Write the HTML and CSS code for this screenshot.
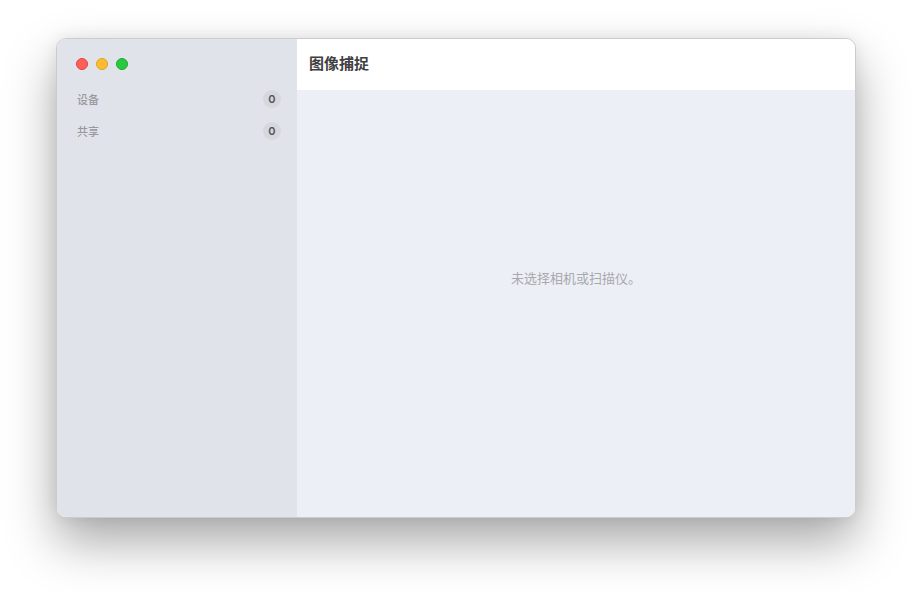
FILE: index.html
```html
<!DOCTYPE html>
<html lang="zh-CN">
<head>
<meta charset="utf-8">
<title>图像捕捉</title>
<link rel="stylesheet" href="styles.css">
</head>
<body>
<div class="stage">
  <div class="window">
    <aside class="sidebar">
      <div class="lights">
        <span class="light red"></span>
        <span class="light yellow"></span>
        <span class="light green"></span>
      </div>
      <ul class="list">
        <li class="row"><span class="label">设备</span><span class="badge">0</span></li>
        <li class="row"><span class="label">共享</span><span class="badge">0</span></li>
      </ul>
    </aside>
    <section class="content">
      <header class="toolbar"><h1 class="title">图像捕捉</h1></header>
      <main class="main"><p class="empty">未选择相机或扫描仪。</p></main>
    </section>
  </div>
</div>
</body>
</html>
```
FILE: styles.css
```css
html, body {
  margin: 0;
  padding: 0;
  background: #ffffff;
  font-family: "Noto Sans CJK SC", "Noto Sans", "Liberation Sans", sans-serif;
}
.stage {
  padding: 38px 56px;
  min-height: 592px;
  box-sizing: border-box;
}
.window {
  width: 800px;
  height: 480px;
  box-sizing: border-box;
  display: flex;
  border-radius: 10px;
  overflow: hidden;
  border: 1px solid rgba(0, 0, 0, 0.2);
  box-shadow: 0 24px 50px rgba(0, 0, 0, 0.34), 0 0 16px rgba(0, 0, 0, 0.08);
}
.sidebar {
  width: 240px;
  flex: none;
  background: #e1e3ea;
  padding: 19px 16px 0 19px;
  box-sizing: border-box;
}
.lights {
  display: flex;
  gap: 8px;
  height: 12px;
}
.light {
  width: 12px;
  height: 12px;
  border-radius: 50%;
  box-sizing: border-box;
}
.red { background: #fe5f57; border: 0.5px solid #e0443e; }
.yellow { background: #febc2e; border: 0.5px solid #dea123; }
.green { background: #28c840; border: 0.5px solid #1aab29; }
.list {
  list-style: none;
  margin: 13px 0 0 0;
  padding: 0;
}
.row {
  height: 32px;
  display: flex;
  align-items: center;
  justify-content: space-between;
  padding-left: 1px;
}
.label {
  font-size: 11px;
  font-weight: 500;
  color: #98999e;
}
.badge {
  width: 18px;
  height: 18px;
  border-radius: 50%;
  background: #d6d8de;
  color: #55565a;
  font-family: "Inter", "Liberation Sans", sans-serif;
  font-size: 11px;
  font-weight: 600;
  display: flex;
  align-items: center;
  justify-content: center;
}
.content {
  flex: 1;
  display: flex;
  flex-direction: column;
  min-width: 0;
}
.toolbar {
  height: 51px;
  flex: none;
  background: #ffffff;
  display: flex;
  align-items: center;
  padding-left: 12px;
  padding-bottom: 5px;
  box-sizing: border-box;
}
.title {
  margin: 0;
  font-size: 15px;
  font-weight: 700;
  color: #3f3f42;
}
.main {
  flex: 1;
  background: #eceff6;
  display: flex;
  align-items: center;
  justify-content: center;
  padding-bottom: 52px;
}
.empty {
  margin: 0;
  font-size: 13px;
  color: #a8a9ad;
}
```
